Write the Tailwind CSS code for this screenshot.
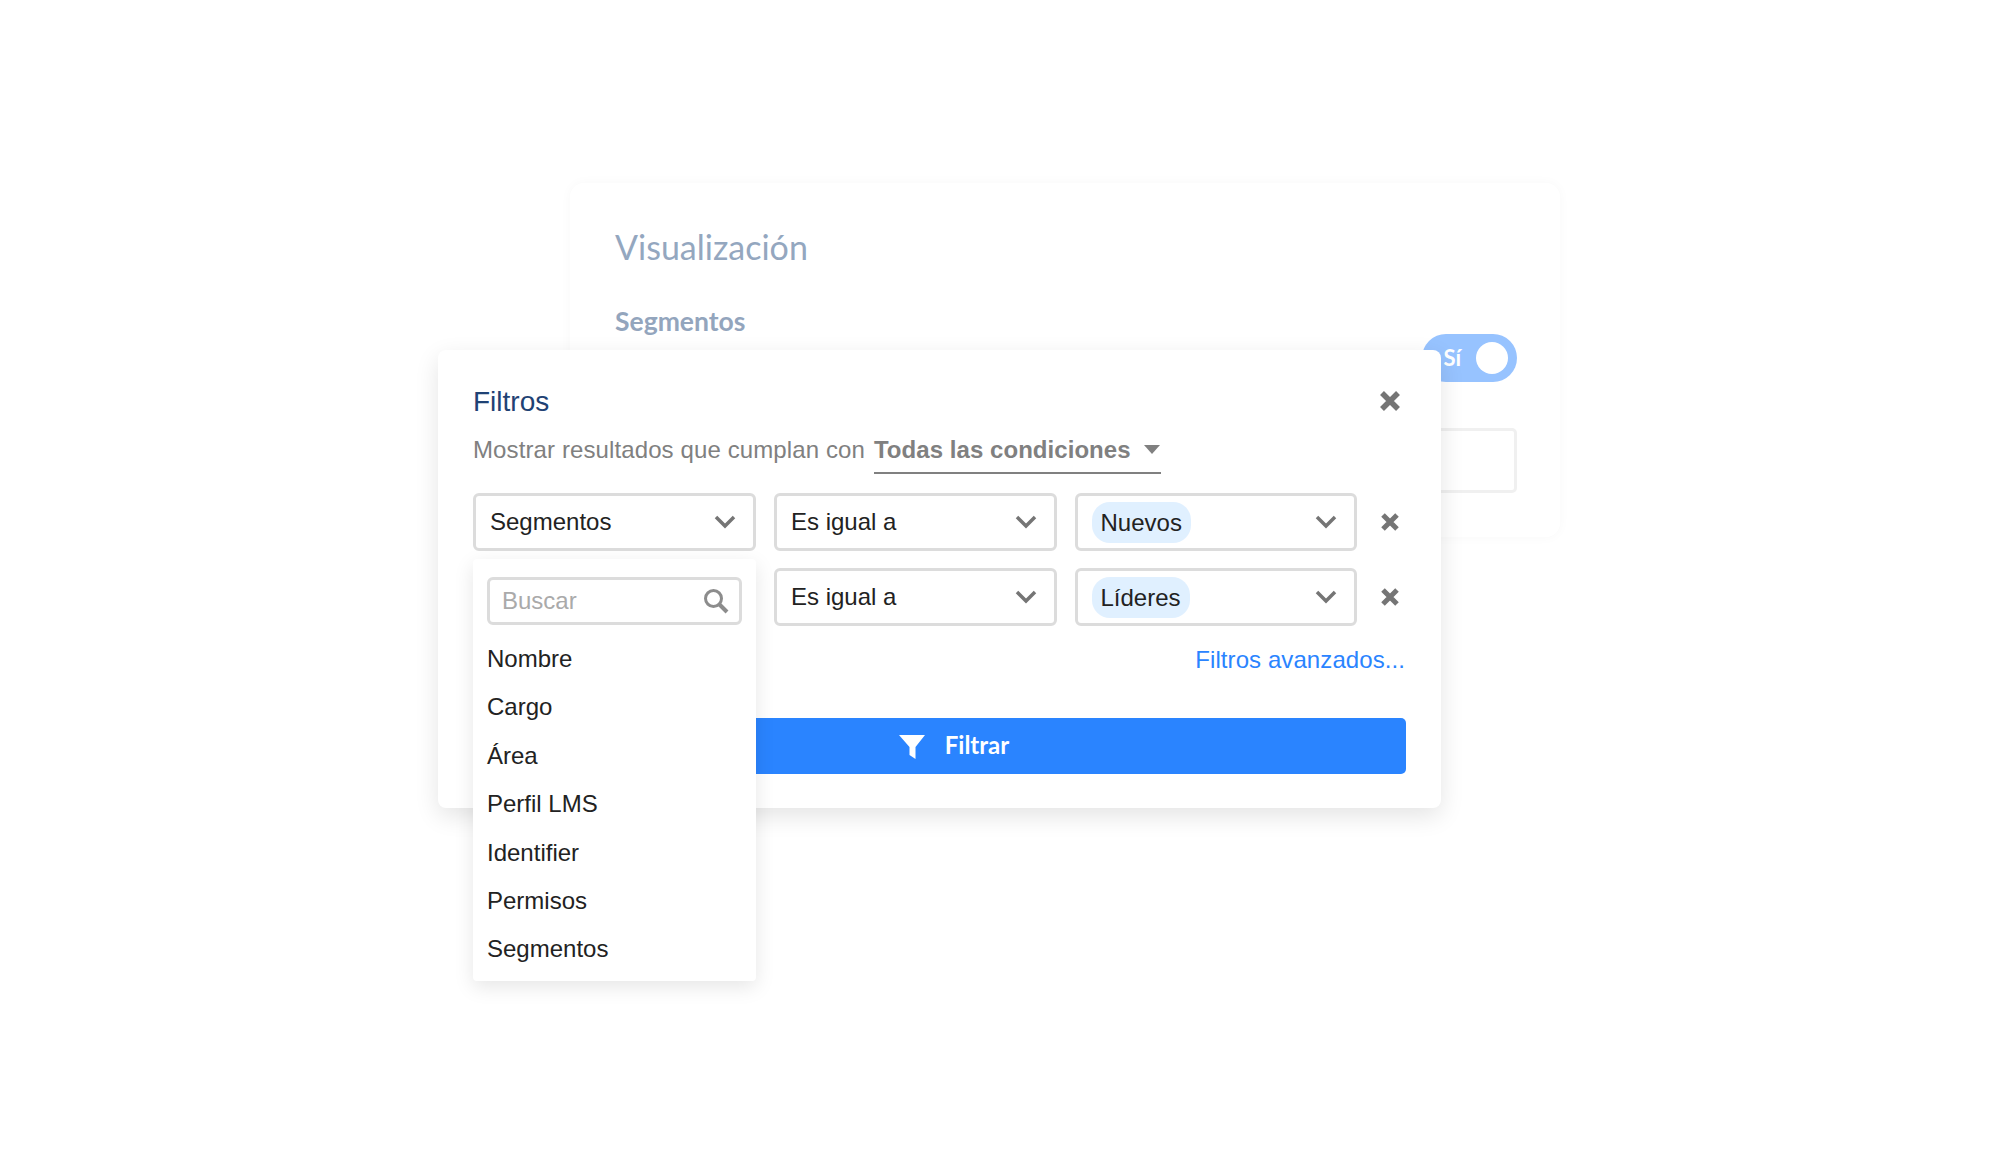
<!DOCTYPE html>
<html lang="es">
<head>
    <meta charset="UTF-8">
    <meta name="viewport" content="width=device-width, initial-scale=1.0">
    <title>Filtros</title>
    <script src="https://cdn.jsdelivr.net/npm/@tailwindcss/browser@4"></script>
</head>
<body class="bg-white font-['Liberation_Sans',Arial,sans-serif]">
    <div class="relative w-[2000px] h-[1166px] overflow-hidden">

        <!-- Tarjeta de fondo -->
        <div class="absolute left-[570px] top-[183px] w-[990px] h-[354px] rounded-[14px] bg-white shadow-[0_0_12px_rgba(0,0,0,0.03)] pl-[45px] pr-[43px] pt-[42px] font-['Lato',sans-serif]">
            <h2 class="text-[34px] leading-[44px] font-normal text-[#94a7bf]">Visualización</h2>
            <div class="mt-[35px] flex justify-between items-start">
                <div class="text-[26.5px] leading-[35px] font-bold text-[#93a5bd]">Segmentos</div>
                <div class="mt-[30px] w-[95px] h-[48px] rounded-full bg-[#97c3ff] flex items-center justify-end gap-[15px] pr-[9px] text-white">
                    <span class="text-[22px] font-bold mb-[2px]">Sí</span>
                    <span class="w-[32px] h-[32px] rounded-full bg-white"></span>
                </div>
            </div>
            <div class="mt-[46px] h-[65px] rounded-[5px] border-[3px] border-[#f0f0f0]"></div>
        </div>

        <!-- Modal de filtros -->
        <div class="absolute left-[438px] top-[350px] w-[1003px] h-[458px] rounded-[8px] bg-white shadow-[0_8px_24px_rgba(0,0,0,0.11)] pl-[35px] pr-[35px]">
            <div class="h-[74px] pt-[28px] flex items-center justify-between">
                <h1 class="text-[28px] text-[#1f4274] mt-[1px]">Filtros</h1>
                <svg class="mr-[5px]" width="22" height="22" viewBox="0 0 22 22"><path d="M3 3l16 16M19 3L3 19" stroke="#757575" stroke-width="5.5"/></svg>
            </div>
            <div class="flex items-start text-[24px] text-[#808080] h-[49px]">
                <span class="leading-[52px] tracking-[0.11px]">Mostrar resultados que cumplan con</span>
                <div class="ml-[9px] w-[287px] h-[50px] border-b-2 border-[#808080] flex items-start justify-between pr-[1px]">
                    <span class="font-bold leading-[52px] tracking-[0.05px]">Todas las condiciones</span>
                    <svg class="mt-[21px]" width="16" height="9" viewBox="0 0 16 9"><path d="M0 0h16L8 9z" fill="#808080"/></svg>
                </div>
            </div>
            <div class="mt-[20px] flex flex-col gap-[17px] text-[24px] text-[#222]">
                <div class="flex items-center gap-[18px]">
                    <div class="w-[283px] h-[58px] rounded-[6px] border-[3px] border-[#dcdcdc] flex items-center justify-between pl-[14px] pr-[17px]">
                        Segmentos
                        <svg width="22" height="14" viewBox="0 0 22 14"><path d="M2 2l9 9 9-9" fill="none" stroke="#757575" stroke-width="3.5"/></svg>
                    </div>
                    <div class="w-[282.5px] h-[58px] rounded-[6px] border-[3px] border-[#dcdcdc] flex items-center justify-between pl-[14px] pr-[17px]">
                        Es igual a
                        <svg width="22" height="14" viewBox="0 0 22 14"><path d="M2 2l9 9 9-9" fill="none" stroke="#757575" stroke-width="3.5"/></svg>
                    </div>
                    <div class="w-[282.5px] h-[58px] rounded-[6px] border-[3px] border-[#dcdcdc] flex items-center justify-between pl-[14px] pr-[17px]">
                        <span class="h-[41px] rounded-[18px] bg-[#e0f0ff] px-[9px] leading-[41px]">Nuevos</span>
                        <svg width="22" height="14" viewBox="0 0 22 14"><path d="M2 2l9 9 9-9" fill="none" stroke="#757575" stroke-width="3.5"/></svg>
                    </div>
                    <svg class="ml-[6px]" width="18" height="18" viewBox="0 0 18 18"><path d="M2 2l14 14M16 2L2 16" stroke="#757575" stroke-width="5"/></svg>
                </div>
                <div class="flex items-center gap-[18px]">
                    <div class="w-[283px] h-[58px]"></div>
                    <div class="w-[282.5px] h-[58px] rounded-[6px] border-[3px] border-[#dcdcdc] flex items-center justify-between pl-[14px] pr-[17px]">
                        Es igual a
                        <svg width="22" height="14" viewBox="0 0 22 14"><path d="M2 2l9 9 9-9" fill="none" stroke="#757575" stroke-width="3.5"/></svg>
                    </div>
                    <div class="w-[282.5px] h-[58px] rounded-[6px] border-[3px] border-[#dcdcdc] flex items-center justify-between pl-[14px] pr-[17px]">
                        <span class="h-[41px] rounded-[18px] bg-[#e0f0ff] px-[9px] leading-[41px]">Líderes</span>
                        <svg width="22" height="14" viewBox="0 0 22 14"><path d="M2 2l9 9 9-9" fill="none" stroke="#757575" stroke-width="3.5"/></svg>
                    </div>
                    <svg class="ml-[6px]" width="18" height="18" viewBox="0 0 18 18"><path d="M2 2l14 14M16 2L2 16" stroke="#757575" stroke-width="5"/></svg>
                </div>
            </div>
            <div class="mt-[16px] h-[36px] pr-[1px] flex items-center justify-end text-[24px] tracking-[0.08px] text-[#2a84ff]">Filtros avanzados...</div>
            <div class="mt-[40px] h-[56px] rounded-[5px] bg-[#2a84ff] flex items-center justify-center gap-[20px] pl-[29px] text-white">
                <svg class="mt-[1px]" width="26" height="26" viewBox="0 0 26 26"><path d="M0 1h26L16.5 13v12l-6-4v-8z" fill="#fff"/></svg>
                <span class="text-[24px] leading-[28px] mb-[2px] font-bold font-['Lato',sans-serif]">Filtrar</span>
            </div>
        </div>

        <!-- Desplegable de campos -->
        <div class="absolute left-[473px] top-[559px] w-[283px] h-[422px] rounded-[4px] bg-white shadow-[0_6px_20px_rgba(0,0,0,0.1)] px-[14px] pt-[18px] text-[24px] text-[#222]">
            <div class="w-[255px] h-[48px] rounded-[6px] border-[3px] border-[#dcdcdc] flex items-center justify-between pl-[12px] pr-[10px] text-[#aaa]">
                Buscar
                <svg width="26" height="26" viewBox="0 0 26 26"><circle cx="10.5" cy="10.5" r="8" fill="none" stroke="#8c8c8c" stroke-width="3"/><path d="M16.5 16.5l7.5 7.5" stroke="#8c8c8c" stroke-width="4"/></svg>
            </div>
            <ul class="mt-[10px]">
                <li class="h-[48.4px] leading-[48.4px]">Nombre</li>
                <li class="h-[48.4px] leading-[48.4px]">Cargo</li>
                <li class="h-[48.4px] leading-[48.4px]">Área</li>
                <li class="h-[48.4px] leading-[48.4px]">Perfil LMS</li>
                <li class="h-[48.4px] leading-[48.4px]">Identifier</li>
                <li class="h-[48.4px] leading-[48.4px]">Permisos</li>
                <li class="h-[48.4px] leading-[48.4px]">Segmentos</li>
            </ul>
        </div>
    </div>
</body>
</html>
